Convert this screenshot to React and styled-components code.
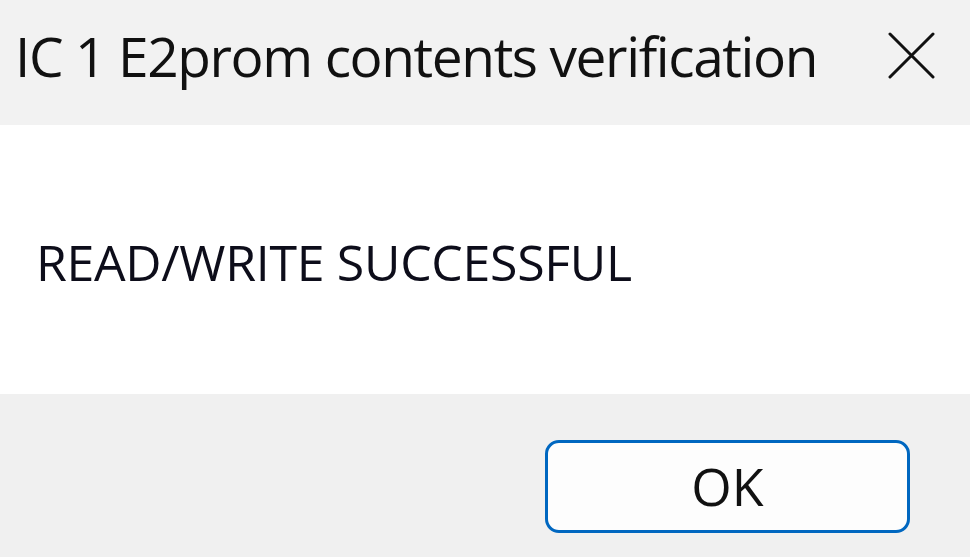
import React from 'react';
import styled, {createGlobalStyle} from 'styled-components';

const GlobalStyle = createGlobalStyle`
  html, body {
    margin: 0;
    padding: 0;
    background: #f0f0f0;
  }
  body {
    font-family: "Open Sans", "Noto Sans", "Liberation Sans", sans-serif;
  }
`

const Dialog = styled.div`
  width: 970px;
  height: 557px;
  display: flex;
  flex-direction: column;
  overflow: hidden;
`

const TitleBar = styled.div`
  height: 125px;
  flex: none;
  display: flex;
  align-items: center;
  justify-content: space-between;
  padding: 0 35px 14px 15px;
  box-sizing: border-box;
  background: #f2f2f2;
`

const Title = styled.h1`
  margin: 0;
  font-size: 55px;
  font-weight: 400;
  color: #111;
  letter-spacing: -1.4px;
  white-space: nowrap;
`

const CloseButton = styled.button`
  border: none;
  background: none;
  padding: 0;
  width: 47px;
  height: 47px;
  display: flex;
  align-items: center;
  justify-content: center;
  color: #111;
`

const Body = styled.div`
  height: 269px;
  flex: none;
  background: #fff;
  display: flex;
  align-items: center;
  padding-left: 36px;
  box-sizing: border-box;
`

const Message = styled.p`
  margin: 0;
  font-size: 50px;
  font-weight: 400;
  color: #0d0d1a;
  letter-spacing: -0.3px;
  padding-top: 4px;
`

const Footer = styled.div`
  flex: 1;
  background: #f0f0f0;
  display: flex;
  justify-content: flex-end;
  align-items: flex-start;
  padding: 46px 60px 0 0;
  box-sizing: border-box;
`

const Button = styled.button`
  width: 365px;
  height: 93px;
  box-sizing: border-box;
  border: 3px solid #0067c0;
  border-radius: 14px;
  background: #fdfdfd;
  font-family: inherit;
  font-size: 52px;
  color: #111;
  display: flex;
  align-items: center;
  justify-content: center;
  padding: 0 0 2px 0;
`

const CloseIcon = () => (
    <svg width="47" height="47" viewBox="0 0 47 47" fill="none" stroke="currentColor" strokeWidth="3" strokeLinecap="round">
        <path d="M2 2 L45 45 M45 2 L2 45"/>
    </svg>
)

const App = () => {
    return (
        <Dialog>
            <GlobalStyle/>
            <TitleBar>
                <Title>IC 1 E2prom contents verification</Title>
                <CloseButton aria-label="Close"><CloseIcon/></CloseButton>
            </TitleBar>
            <Body>
                <Message>READ/WRITE SUCCESSFUL</Message>
            </Body>
            <Footer>
                <Button>OK</Button>
            </Footer>
        </Dialog>
    );
};

export default App;
